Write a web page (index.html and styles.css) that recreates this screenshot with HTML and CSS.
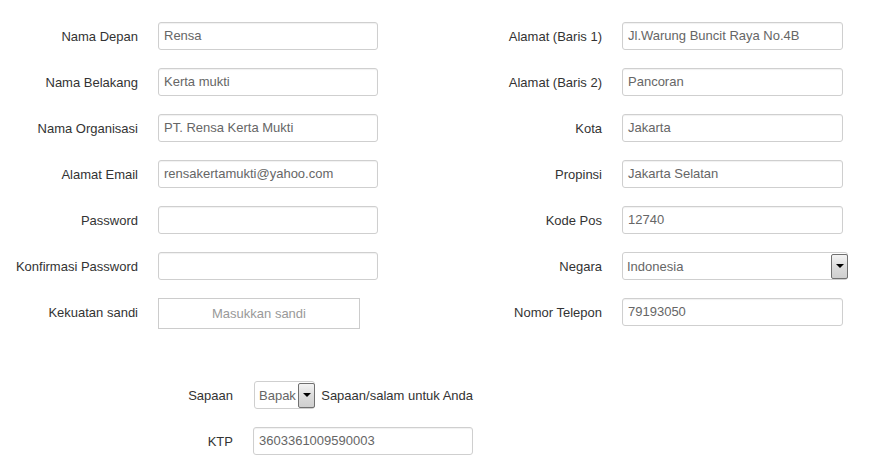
FILE: index.html
```html
<!DOCTYPE html>
<html>
<head>
<meta charset="utf-8">
<link rel="stylesheet" href="styles.css">
</head>
<body>
<form class="form">
  <div class="columns">
    <div class="col col-left">
      <label class="lbl">Nama Depan</label><div class="input">Rensa</div>
      <label class="lbl">Nama Belakang</label><div class="input">Kerta mukti</div>
      <label class="lbl">Nama Organisasi</label><div class="input">PT. Rensa Kerta Mukti</div>
      <label class="lbl">Alamat Email</label><div class="input">rensakertamukti@yahoo.com</div>
      <label class="lbl">Password</label><div class="input"></div>
      <label class="lbl">Konfirmasi Password</label><div class="input"></div>
      <label class="lbl">Kekuatan sandi</label><div class="strength">Masukkan sandi</div>
    </div>
    <div class="col col-right">
      <label class="lbl">Alamat (Baris 1)</label><div class="input">Jl.Warung Buncit Raya No.4B</div>
      <label class="lbl">Alamat (Baris 2)</label><div class="input">Pancoran</div>
      <label class="lbl">Kota</label><div class="input">Jakarta</div>
      <label class="lbl">Propinsi</label><div class="input">Jakarta Selatan</div>
      <label class="lbl">Kode Pos</label><div class="input">12740</div>
      <label class="lbl">Negara</label><div class="select select-wide"><span class="select-text">Indonesia</span><span class="select-btn"><span class="arrow"></span></span></div>
      <label class="lbl">Nomor Telepon</label><div class="input">79193050</div>
    </div>
  </div>
  <div class="extra">
    <label class="lbl">Sapaan</label>
    <div class="inline">
      <div class="select select-small"><span class="select-text">Bapak</span><span class="select-btn"><span class="arrow"></span></span></div>
      <span class="help">Sapaan/salam untuk Anda</span>
    </div>
    <label class="lbl">KTP</label><div class="input">3603361009590003</div>
  </div>
</form>
</body>
</html>
```

FILE: styles.css
```css
* { box-sizing: border-box; }
body {
  margin: 0;
  background: #fff;
  font-family: "Liberation Sans", Arial, sans-serif;
  font-size: 13px;
  color: #333;
}
.form {
  padding-top: 22px;
}
.columns {
  display: flex;
}
.col {
  display: grid;
  column-gap: 20px;
  row-gap: 18px;
  grid-auto-rows: 28px;
  align-items: center;
}
.col-left {
  grid-template-columns: 138px 220px;
  width: 463px;
}
.col-right {
  grid-template-columns: 139px 221px;
}
.lbl {
  text-align: right;
  white-space: nowrap;
}
.input {
  height: 28px;
  border: 1px solid #cfcfcf;
  border-radius: 3px;
  box-shadow: inset 0 1px 1px rgba(0,0,0,0.06);
  padding: 0 5px;
  line-height: 26px;
  color: #666;
  white-space: nowrap;
  overflow: hidden;
}
.strength {
  width: 202px;
  height: 31px;
  align-self: end;
  margin-bottom: -3px;
  border: 1px solid #ccc;
  text-align: center;
  line-height: 29px;
  color: #999;
}
.select {
  display: flex;
  align-items: center;
  height: 28px;
  border: 1px solid #cfcfcf;
  border-radius: 3px;
  padding: 0 0 0 4px;
  color: #666;
  background: #fff;
}
.select-wide { width: 226px; }
.select-small { width: 62px; }
.select-text { flex: 1; white-space: nowrap; overflow: hidden; }
.select-btn {
  width: 17px;
  height: 25px;
  border: 1px solid #707070;
  border-radius: 2px;
  background: linear-gradient(#f4f4f4, #dcdcdc 50%, #cfcfcf);
  display: flex;
  align-items: center;
  justify-content: center;
  margin-right: -1px;
}
.arrow {
  width: 0;
  height: 0;
  border-left: 4px solid transparent;
  border-right: 4px solid transparent;
  border-top: 4px solid #000;
}
.extra {
  display: grid;
  grid-template-columns: 233px 220px;
  column-gap: 20px;
  row-gap: 18px;
  grid-auto-rows: 28px;
  align-items: center;
  margin-top: 55px;
}
.inline {
  display: flex;
  align-items: center;
  gap: 6px;
  margin-left: 1px;
}
.help {
  white-space: nowrap;
}
```
